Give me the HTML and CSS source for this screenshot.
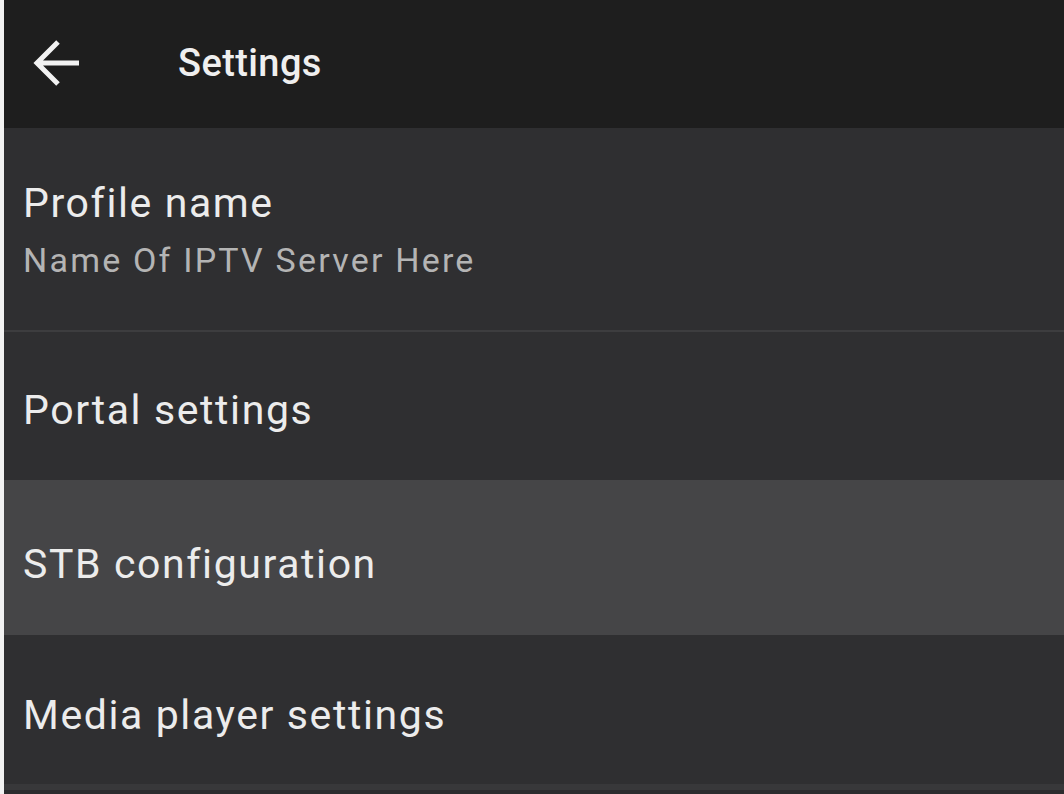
FILE: index.html
```html
<!DOCTYPE html>
<html lang="en">
<head>
    <meta charset="UTF-8">
    <title>Settings</title>

    <link rel="stylesheet" href="styles.css">
</head>
<body>

    <div class="app">
        <div class="toolbar">
            <span class="back">
                <svg width="50" height="48" viewBox="0 0 50 48">
                    <path d="M47 24H6M26 3L5 24l21 21" fill="none" stroke="#f2f2f2" stroke-width="5"/>
                </svg>
            </span>
            <h1>Settings</h1>
        </div>

        <ul class="list">
            <li class="item item-tall">
                <div class="title">Profile name</div>
                <div class="summary">Name Of IPTV Server Here</div>
            </li>
            <li class="item">
                <div class="title">Portal settings</div>
            </li>
            <li class="item active">
                <div class="title">STB configuration</div>
            </li>
            <li class="item last">
                <div class="title">Media player settings</div>
            </li>
        </ul>
    </div>

</body>
</html>
```

FILE: styles.css
```css
* {
    margin: 0;
    padding: 0;
    box-sizing: border-box;
}

html, body {
    height: 100%;
}

body {
    background: #f2f2f2;
    padding-left: 4px;
    font-family: Roboto, "Noto Sans", sans-serif;
    color: #ececec;
    overflow: hidden;
}

.app {
    height: 100%;
    background: #2c2c2e;
}

.toolbar {
    height: 128px;
    padding-bottom: 3px;
    background: #1e1e1e;
    display: flex;
    align-items: center;
}

.back {
    width: 50px;
    margin-left: 28px;
    display: flex;
}

.toolbar h1 {
    margin-left: 96px;
    font-size: 38px;
    font-weight: 500;
    letter-spacing: 0.4px;
    color: #efefef;
}

.list {
    list-style: none;
}

/* one row per preference */
.item {
    height: 148px;
    padding: 8px 0 0 19px;
    display: flex;
    flex-direction: column;
    justify-content: center;
    background: #2f2f31;
}

.item-tall {
    height: 204px;
    padding-top: 51px;
    justify-content: flex-start;
    border-bottom: 2px solid #3d3d3f;
}

.item.active {
    background: #454547;
    height: 155px;
    padding-top: 12px;
}

.item.last {
    height: 155px;
    padding-top: 10px;
    border-bottom: 6px solid #38383a;
}

.title {
    font-size: 41px;
    line-height: 48px;
    letter-spacing: 1.6px;
}

.summary {
    margin-top: 13px;
    font-size: 34px;
    line-height: 40px;
    letter-spacing: 2.2px;
    color: #b4b4b4;
}
```
